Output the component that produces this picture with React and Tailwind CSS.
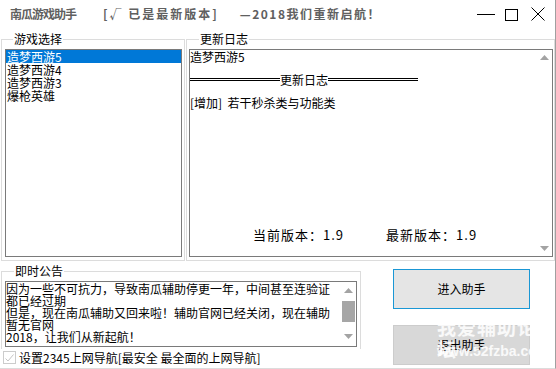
import React, { useState } from 'react';

const games = ['造梦西游5', '造梦西游4', '造梦西游3', '爆枪英雄'];

const notice = [
    '因为一些不可抗力，导致南瓜辅助停更一年，中间甚至连验证',
    '都已经过期',
    '但是，现在南瓜辅助又回来啦！辅助官网已经关闭，现在辅助',
    '暂无官网',
    '2018，让我们从新起航！',
];

const Arrow = ({ down = false }) => (
    <svg width="9" height="5" viewBox="0 0 9 5">
        <path d={down ? 'M0 0H9L4.5 5z' : 'M0 5H9L4.5 0z'} fill="#a3a3a3" />
    </svg>
);

const App = () => {
    const [selected, setSelected] = useState(0);
    const [useNav, setUseNav] = useState(true);

    return (
        <div className="relative w-[556px] h-[369px] overflow-hidden bg-white border-r border-b border-r-[#a0a0a0] border-b-[#dcdcdc] text-black font-['Noto_Sans_CJK_SC',sans-serif] text-[12px]">
            {/* title bar */}
            <div className="flex h-[32px] items-start pt-[7px] pl-[10px] pr-[10px]">
                <div className="flex text-[12px] leading-[14px] font-bold text-[#606060] whitespace-pre">
                    <span className="tracking-[-1px]">南瓜游戏助手</span>
                    <span className="ml-[27px] tracking-[2px]">[√ 已是最新版本]</span>
                    <span className="ml-[21px] tracking-[1.5px]">—2018我们重新启航！</span>
                </div>
                <div className="ml-auto flex items-start">
                    <svg width="18" height="14" viewBox="0 0 18 14">
                        <path d="M0 7.5H18" stroke="#000" />
                    </svg>
                    <svg className="ml-[10px]" width="13" height="14" viewBox="0 0 13 14">
                        <rect x="0.5" y="2.5" width="12" height="11" fill="none" stroke="#000" />
                    </svg>
                    <svg className="ml-[13px]" width="14" height="14" viewBox="0 0 14 14">
                        <path d="M0.5 0.5L13.5 13.5M13.5 0.5L0.5 13.5" stroke="#000" />
                    </svg>
                </div>
            </div>

            {/* top groups */}
            <div className="flex">
                <fieldset className="ml-[1px] w-[184px] border border-[#dcdcdc] pl-[3px] pr-[2px] pb-[3px]">
                    <legend className="ml-[8px] px-[1px] leading-[14px]">游戏选择</legend>
                    <div className="mt-[3px] h-[208px] border border-[#7a7a7a]">
                        {games.map((g, i) => (
                            <div
                                key={g}
                                onClick={() => setSelected(i)}
                                className={`pl-[1px] leading-[13px] h-[13px] cursor-default ${
                                    selected === i ? 'bg-[#0078d7] text-white' : ''
                                }`}
                            >
                                {g}
                            </div>
                        ))}
                    </div>
                </fieldset>

                <fieldset className="ml-[1px] w-[369px] border border-[#dcdcdc] pl-[2px] pr-[1px] pb-[3px]">
                    <legend className="ml-[10px] px-[1px] leading-[14px]">更新日志</legend>
                    <div className="mt-[3px] h-[208px] border border-[#7a7a7a] flex">
                        <div className="flex-1 flex flex-col leading-[13px]">
                            <div>造梦西游5</div>
                            <div className="mt-[10px] flex w-[228px] items-center">
                                <div className="flex-1 border-t-[3px] border-double border-black"></div>
                                <span>更新日志</span>
                                <div className="flex-1 border-t-[3px] border-double border-black"></div>
                            </div>
                            <div className="mt-[10px] whitespace-pre">[增加]  若干秒杀类与功能类</div>
                            <div className="mt-auto pb-[15px] pl-[63px] flex gap-[42px] text-[13px] tracking-[1px]">
                                <span>当前版本：1.9</span>
                                <span>最新版本：1.9</span>
                            </div>
                        </div>
                        <div className="w-[15px] flex flex-col items-center justify-between py-[5px]">
                            <Arrow />
                            <Arrow down />
                        </div>
                    </div>
                </fieldset>
            </div>

            {/* bottom */}
            <div className="flex mt-[3px]">
                <div className="ml-[1px] w-[360px] flex flex-col">
                    <fieldset className="border border-b-0 border-[#dcdcdc] pl-[3px] pr-[3px] pb-[2px]">
                        <legend className="ml-[9px] px-[1px] leading-[14px]">即时公告</legend>
                        <div className="mt-[3px] h-[66px] border border-[#7a7a7a] flex">
                            <div className="flex-1 pt-[1px] leading-[12px] whitespace-nowrap">
                                {notice.map((line, i) => (
                                    <div key={i}>{line}</div>
                                ))}
                            </div>
                            <div className="w-[15px] flex flex-col items-center pt-[6px]">
                                <Arrow />
                                <div className="mt-[8px] w-[13px] h-[21px] bg-[#a6a6a6]"></div>
                                <div className="mt-[12px]">
                                    <Arrow down />
                                </div>
                            </div>
                        </div>
                    </fieldset>
                    <label className="mt-[2px] ml-[2px] flex items-center">
                        <span
                            onClick={() => setUseNav(!useNav)}
                            className="w-[13px] h-[13px] border border-[#cccccc] flex items-center justify-center"
                        >
                            {useNav && (
                                <svg width="9" height="8" viewBox="0 0 9 8">
                                    <path d="M0.5 4.5L3 7L8.5 0.5" fill="none" stroke="#c4c4c4" />
                                </svg>
                            )}
                        </span>
                        <span className="ml-[3px] leading-[13px]">设置2345上网导航[最安全 最全面的上网导航]</span>
                    </label>
                </div>

                <div className="ml-[32px] pt-[5px] flex flex-col gap-[16px]">
                    <button className="w-[137px] h-[40px] border border-[#1a97d5] bg-[#e5e5e5] text-[12px]">
                        进入助手
                    </button>
                    <button className="w-[137px] h-[40px] border border-[#cccccc] bg-[#d8d8d8] text-[12px]">
                        退出助手
                    </button>
                </div>
            </div>

            {/* watermark */}
            <div className="pointer-events-none absolute left-[437px] top-[316px] text-white/85 font-bold">
                <div className="h-[22px] text-[19px] leading-[22px] tracking-[1px]">我爱辅助论坛</div>
                <div className="mt-[5px] h-[16px] text-[14px] leading-[16px] font-['Liberation_Sans',sans-serif]">www.52fzba.com</div>
            </div>
        </div>
    );
};

export default App;
